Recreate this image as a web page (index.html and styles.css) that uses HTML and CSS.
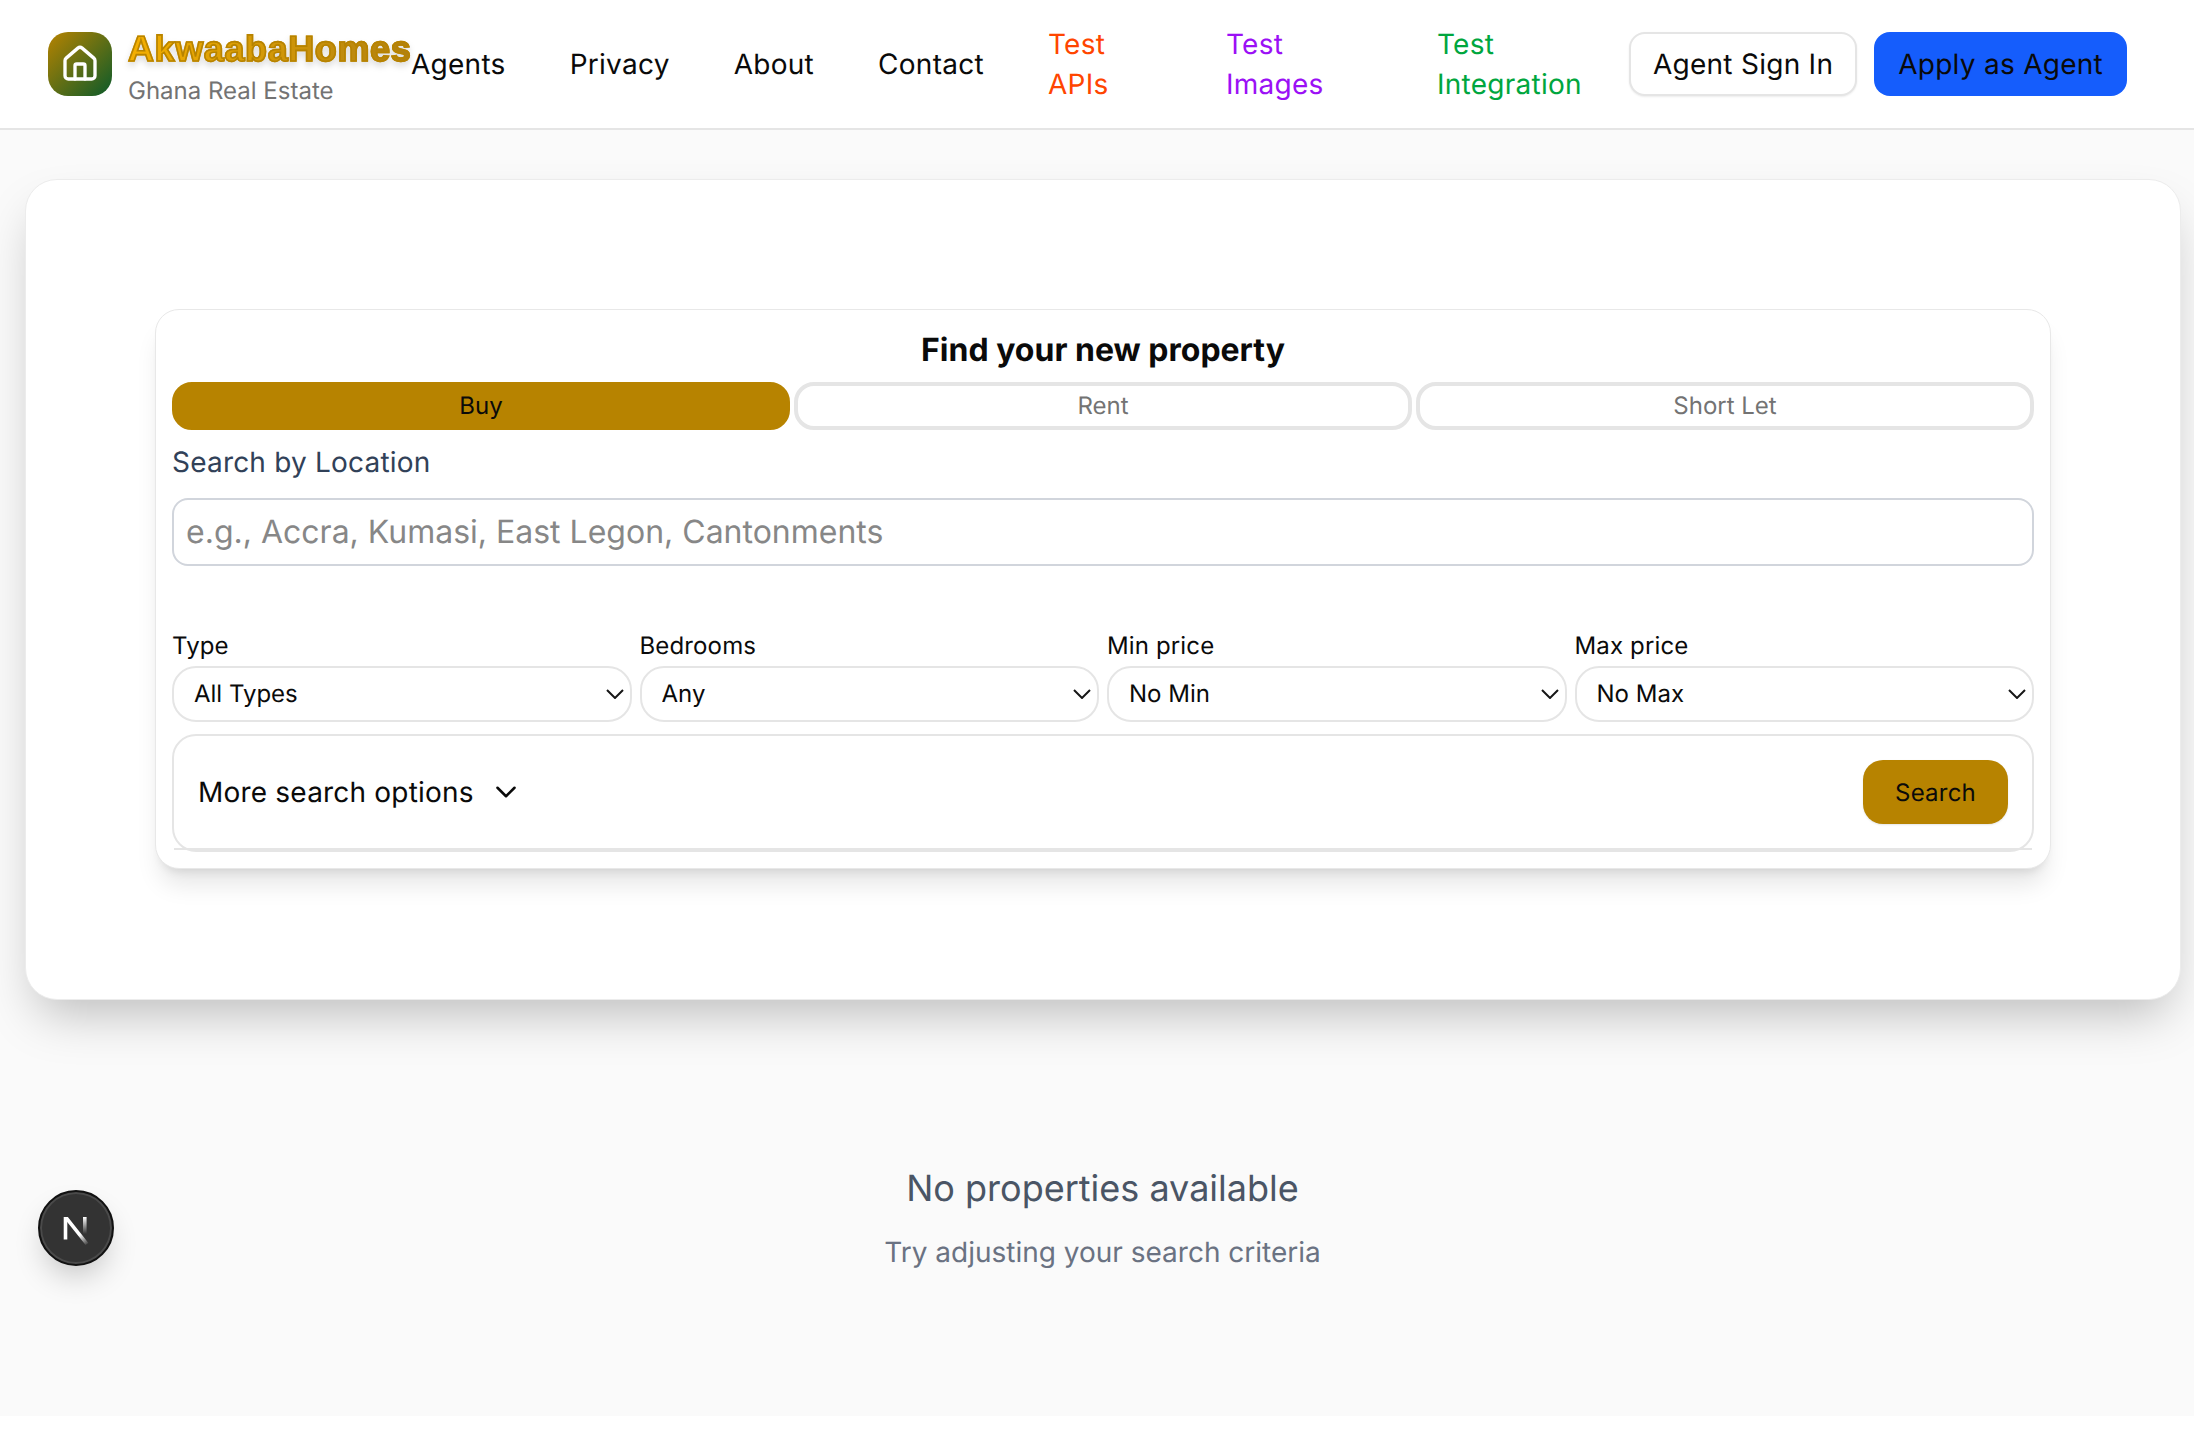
FILE: index.html
```html
<!DOCTYPE html>
<html lang="en">
<head>
<meta charset="utf-8">
<title>AkwaabaHomes</title>
<link rel="stylesheet" href="styles.css">
</head>
<body>
<header class="site-header">
  <a class="brand" href="#">
    <span class="brand-mark">
      <svg viewBox="0 0 24 24" width="40" height="40" fill="none" stroke="#fff" stroke-width="2" stroke-linecap="round" stroke-linejoin="round"><path d="M15 21v-8a1 1 0 0 0-1-1h-4a1 1 0 0 0-1 1v8"/><path d="M3 10a2 2 0 0 1 .709-1.528l7-5.999a2 2 0 0 1 2.582 0l7 5.999A2 2 0 0 1 21 10v9a2 2 0 0 1-2 2H5a2 2 0 0 1-2-2z"/></svg>
    </span>
    <span class="brand-text">
      <span class="brand-name">AkwaabaHomes</span>
      <span class="brand-sub">Ghana Real Estate</span>
    </span>
  </a>
  <nav class="nav">
    <a href="#">Agents</a>
    <a href="#">Privacy</a>
    <a href="#">About</a>
    <a href="#">Contact</a>
    <a href="#" class="test test-apis">Test APIs</a>
    <a href="#" class="test test-images">Test Images</a>
    <a href="#" class="test test-integration">Test Integration</a>
  </nav>
  <div class="actions">
    <button class="btn btn-outline">Agent Sign In</button>
    <button class="btn btn-primary">Apply as Agent</button>
  </div>
</header>

<main class="main">
  <section class="hero">
    <div class="search-card">
      <h1 class="search-title">Find your new property</h1>
      <div class="tabs">
        <button class="tab tab-active">Buy</button>
        <button class="tab">Rent</button>
        <button class="tab">Short Let</button>
      </div>
      <label class="location-label" for="loc">Search by Location</label>
      <input id="loc" class="location-input" placeholder="e.g., Accra, Kumasi, East Legon, Cantonments">
      <div class="filters">
        <div class="filter"><label>Type</label><div class="select-wrap"><select><option>All Types</option></select><svg class="select-arrow" viewBox="0 0 18 10" width="18" height="10"><path d="M1 1l8 8 8-8"/></svg></div></div>
        <div class="filter"><label>Bedrooms</label><div class="select-wrap"><select><option>Any</option></select><svg class="select-arrow" viewBox="0 0 18 10" width="18" height="10"><path d="M1 1l8 8 8-8"/></svg></div></div>
        <div class="filter"><label>Min price</label><div class="select-wrap"><select><option>No Min</option></select><svg class="select-arrow" viewBox="0 0 18 10" width="18" height="10"><path d="M1 1l8 8 8-8"/></svg></div></div>
        <div class="filter"><label>Max price</label><div class="select-wrap"><select><option>No Max</option></select><svg class="select-arrow" viewBox="0 0 18 10" width="18" height="10"><path d="M1 1l8 8 8-8"/></svg></div></div>
      </div>
      <div class="more">
        <div class="more-row">
          <span class="more-toggle">More search options
            <svg viewBox="0 0 24 24" width="34" height="34" fill="none" stroke="#0a0a0a" stroke-width="1.800" stroke-linecap="round" stroke-linejoin="round"><path d="m6 9 6 6 6-6"/></svg>
          </span>
          <button class="search-btn">Search</button>
        </div>
        <div class="more-line"></div>
      </div>
    </div>
  </section>

  <section class="empty">
    <h2 class="empty-title">No properties available</h2>
    <p class="empty-sub">Try adjusting your search criteria</p>
  </section>
</main>

<button class="dev-badge" aria-label="Next.js dev tools">
  <svg viewBox="0 0 40 40" width="40" height="40" fill="none">
    <defs>
      <linearGradient id="nfade1" x1="14" y1="14" x2="32" y2="37" gradientUnits="userSpaceOnUse"><stop offset="0.55" stop-color="#fff"/><stop offset="1" stop-color="#fff" stop-opacity="0"/></linearGradient>
      <linearGradient id="nfade2" x1="0" y1="9" x2="0" y2="26" gradientUnits="userSpaceOnUse"><stop offset="0" stop-color="#fff"/><stop offset="1" stop-color="#fff" stop-opacity="0"/></linearGradient>
    </defs>
    <path d="M9.500 9V31.500" stroke="#fff" stroke-width="3.600"/>
    <path d="M8 10.800H11L31 36" stroke="url(#nfade1)" stroke-width="3.600"/>
    <path d="M28.800 9V26" stroke="url(#nfade2)" stroke-width="3.600"/>
  </svg>
</button>
</body>
</html>
```
FILE: styles.css
```css
* { box-sizing: border-box; }
html { margin: 0; padding: 0; background: #fff; }
body {
  margin: 0;
  padding: 0;
  width: 2194px;
  height: 1416px;
  background: #fafafa;
  color: #0a0a0a;
  font-family: Inter, "Liberation Sans", sans-serif;
  text-rendering: geometricPrecision;
  overflow: hidden;
}
a { color: inherit; text-decoration: none; }
button { font-family: inherit; cursor: pointer; text-rendering: inherit; }

.site-header {
  display: flex;
  align-items: center;
  height: 130px;
  padding: 0 0 0 48px;
  background: #fff;
  border-bottom: 2px solid #e5e5e5;
}
.brand { display: flex; align-items: center; gap: 16px; flex: none; }
.brand-mark {
  width: 64px; height: 64px; border-radius: 20px;
  display: flex; align-items: center; justify-content: center;
  background: linear-gradient(135deg, #b78300, #0b5a2a);
}
.brand-text { display: flex; flex-direction: column; width: 283px; }
.brand-name {
  font-family: "Liberation Sans", Arial, sans-serif;
  font-weight: 700;
  font-size: 36px;
  line-height: 40px;
  letter-spacing: .6px;
  margin-top: 7px;
  color: transparent;
  background: linear-gradient(90deg, #f5b000, #b08010);
  -webkit-background-clip: text;
  background-clip: text;
  -webkit-text-stroke: 1.6px #b78300;
  filter: drop-shadow(0 4px 3px rgba(0,0,0,.14));
  white-space: nowrap;
}
.brand-sub { font-size: 24px; line-height: 32px; color: #737373; margin-top: 6px; }

.nav { display: flex; align-items: center; gap: 64px; font-size: 28px; line-height: 40px; letter-spacing: .27px; flex: none; }
.test-apis { width: 114px; color: #ff4500; }
.test-images { width: 147px; color: #9b10f5; }
.test-integration { width: 144px; color: #00a63e; }

.actions { display: flex; gap: 17px; margin-left: 48px; flex: none; }
.btn {
  height: 64px; border-radius: 16px; font-size: 28px; letter-spacing: .27px; color: #0a0a0a;
}
.btn-outline { padding: 0 22px; background: #fff; border: 2px solid #e5e5e5; box-shadow: 0 1px 2px rgba(0,0,0,.08); }
.btn-primary { padding: 0 24px; background: #155dfc; border: 0; }

.hero {
  width: 2156px; height: 821px;
  margin: 49px 0 0 25px;
  padding: 129px;
  background: #fff;
  border: 1px solid #ececec;
  border-radius: 32px;
  box-shadow: 0 25px 50px -12px rgba(0,0,0,.25);
}
.search-card {
  display: flex; flex-direction: column;
  padding: 16px;
  background: #fff;
  border: 1px solid #e8e8e8;
  border-radius: 24px;
  box-shadow: 0 20px 25px -5px rgba(0,0,0,.1), 0 8px 10px -6px rgba(0,0,0,.1);
}
.search-title { margin: 0; text-align: center; font-size: 32px; line-height: 40px; font-weight: 700; height: 56px; padding-top: 4px; }
.tabs { display: grid; grid-template-columns: repeat(3, 1fr); gap: 4px; }
.tab {
  height: 48px; border-radius: 20px; background: #fff;
  border: 4px solid #e5e5e5; font-size: 24px; color: #737373; padding: 0 0 2px;
}
.tab-active { background: #b78300; border-color: #b78300; color: #0a0a0a; }
.location-label { font-size: 28px; line-height: 40px; letter-spacing: .2px; color: #314158; margin-top: 12px; }
.location-input {
  display: block; width: 100%; height: 68px; margin-top: 16px;
  border: 2px solid #d1d5dc; border-radius: 16px; background: #fff;
  padding: 0 12px 2px; font: 400 32px Inter, sans-serif; color: #0a0a0a; text-rendering: inherit;
}
.location-input::placeholder { color: #878787; opacity: 1; }
.filters { display: grid; grid-template-columns: repeat(4, 1fr); gap: 8px; margin-top: 64px; }
.filter { display: flex; flex-direction: column; }
.filter label { font-size: 24px; line-height: 32px; letter-spacing: .14px; margin-bottom: 4px; }
.select-wrap { position: relative; }
.select-wrap select {
  display: block; appearance: none;
  height: 56px; border: 2px solid #e5e5e5; border-radius: 24px; background: #fff;
  font: 400 24px Inter, sans-serif; color: #0a0a0a; padding: 0 20px 1px; width: 100%; text-rendering: inherit;
}
.select-arrow {
  position: absolute; right: 8px; top: 23px;
  fill: none; stroke: #171717; stroke-width: 2;
  pointer-events: none;
}
.more {
  margin-top: 12px; height: 118px;
  border: 2px solid #e5e5e5; border-radius: 24px;
}
.more-row { display: flex; align-items: center; justify-content: space-between; height: 112px; padding: 0 24px; }
.more-toggle { display: flex; align-items: center; gap: 15px; font-size: 28px; letter-spacing: .2px; }
.more-line { height: 2px; background: #e5e5e5; }
.search-btn {
  width: 145px; height: 64px; border: 0; border-radius: 20px; background: #b78300; color: #0a0a0a; font-size: 24px; letter-spacing: .22px;
  box-shadow: 0 1px 2px rgba(0,0,0,.1);
}

.empty { width: 2205px; text-align: center; padding-top: 164px; }
.empty-title { margin: 0; font-size: 36px; line-height: 48px; font-weight: 400; color: #4a5565; }
.empty-sub { margin: 20px 0 0; font-size: 28px; line-height: 40px; color: #6a7282; }

.dev-badge {
  position: fixed; left: 38px; top: 1190px;
  width: 76px; height: 76px; border-radius: 50%; padding: 0;
  display: flex; align-items: center; justify-content: center;
  background: #333; border: 2px solid #111;
  box-shadow: inset 0 0 0 2px #4a4a4a, 0 16px 32px -8px rgba(0,0,0,.24);
}
```
